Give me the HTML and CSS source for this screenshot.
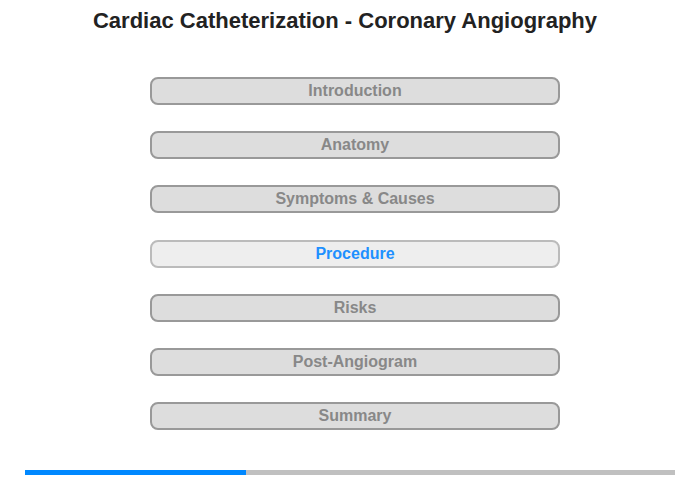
FILE: index.html
```html
<!DOCTYPE html>
<html>
<head>
<meta charset="utf-8">
<link rel="stylesheet" href="styles.css">
</head>
<body>
<div class="page">
  <h1 class="title">Cardiac Catheterization - Coronary Angiography</h1>
  <nav class="menu">
    <div class="item">Introduction</div>
    <div class="item">Anatomy</div>
    <div class="item">Symptoms &amp; Causes</div>
    <div class="item active">Procedure</div>
    <div class="item">Risks</div>
    <div class="item">Post-Angiogram</div>
    <div class="item">Summary</div>
  </nav>
  <div class="progress"><div class="fill" style="width:34%"></div></div>
</div>
</body>
</html>
```

FILE: styles.css
```css
html, body {
  margin: 0;
  padding: 0;
  background: #fff;
}
.page {
  width: 700px;
  height: 480px;
  display: flex;
  flex-direction: column;
  font-family: "Liberation Sans", Arial, sans-serif;
}
.title {
  margin: 0;
  padding: 8px 10px 0 0;
  height: 77px;
  box-sizing: border-box;
  text-align: center;
  font-size: 22px;
  font-weight: bold;
  color: #222;
  line-height: 26px;
}
.menu {
  display: flex;
  flex-direction: column;
  align-items: center;
  gap: 26.2px;
  padding-left: 10px;
}
.item {
  width: 410px;
  height: 28px;
  box-sizing: border-box;
  border: 2px solid #999;
  border-radius: 8px;
  background: #ddd;
  color: #888;
  font-size: 16px;
  font-weight: bold;
  text-align: center;
  line-height: 24px;
}
.item.active {
  background: #eee;
  border-color: #bbb;
  color: #1e90ff;
}
.progress {
  margin: 40px 25px 0;
  height: 5px;
  background: #c0c0c0;
}
.fill {
  height: 100%;
  background: #0088ff;
}
```
